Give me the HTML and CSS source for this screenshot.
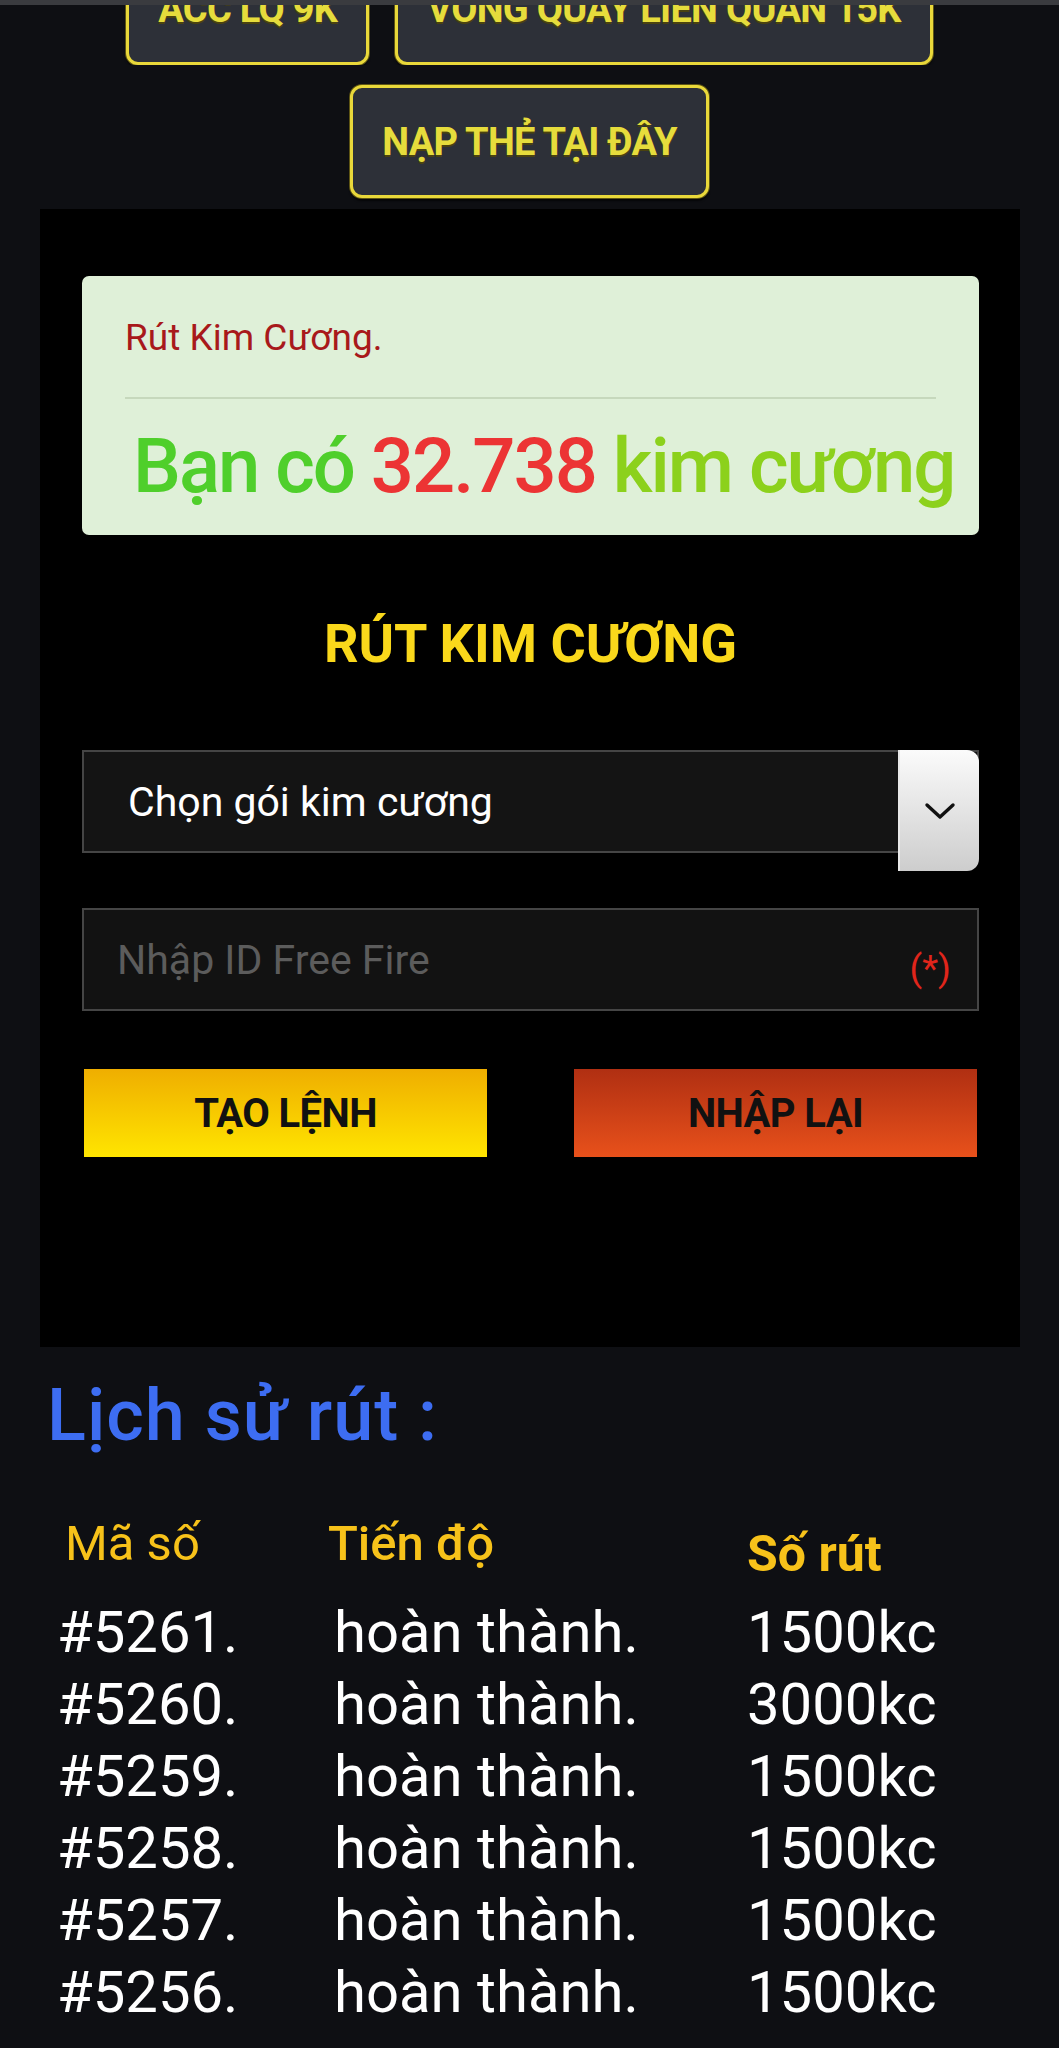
FILE: index.html
```html
<!DOCTYPE html>
<html lang="vi">

<head>
    <meta charset="UTF-8">
    <meta name="viewport" content="width=device-width, initial-scale=1.0">
    <title>Rút Kim Cương</title>
    <link rel="stylesheet" href="styles.css">
</head>

<body>
    <div class="status-bar"></div>

    <div class="top-links clipped">
        <a class="game-btn" href="#">ACC LQ 9K</a>
        <a class="game-btn" href="#">VÒNG QUAY LIÊN QUÂN 15K</a>
    </div>
    <div class="top-links">
        <a class="game-btn" href="#">NẠP THẺ TẠI ĐÂY</a>
    </div>

    <div class="withdraw-box">
        <div class="alert-success">
            <p class="alert-title">Rút Kim Cương.</p>
            <hr>
            <p class="balance"><span class="txt-green">Bạn có</span> <span class="txt-red">32.738</span> <span class="txt-lime">kim cương</span></p>
        </div>

        <h3 class="form-title">RÚT KIM CƯƠNG</h3>

        <form id="withdrawForm">
            <div class="select-wrap">
                <select id="package" name="package">
                    <option value="">Chọn gói kim cương</option>
                    <option value="1500">1500 kim cương</option>
                    <option value="3000">3000 kim cương</option>
                </select>
                <span class="select-arrow">
                    <svg width="34" height="20" viewBox="0 0 34 20"><polyline points="4,4 17,16 30,4" fill="none" stroke="#111" stroke-width="3.4" stroke-linecap="round" stroke-linejoin="round"/></svg>
                </span>
            </div>
            <div class="input-wrap">
                <input type="text" id="ffid" name="ffid" placeholder="Nhập ID Free Fire">
                <span class="required">(*)</span>
            </div>
            <div class="actions">
                <button type="submit" class="btn-create">TẠO LỆNH</button>
                <button type="reset" class="btn-reset">NHẬP LẠI</button>
            </div>
        </form>
    </div>

    <h2 class="history-title">Lịch sử rút :</h2>

    <div class="history">
        <div class="history-head">
            <span class="th-code">Mã số</span>
            <span class="th-status">Tiến độ</span>
            <span class="th-amount">Số rút</span>
        </div>
        <div class="history-row"><span>#5261.</span><span>hoàn thành.</span><span>1500kc</span></div>
        <div class="history-row"><span>#5260.</span><span>hoàn thành.</span><span>3000kc</span></div>
        <div class="history-row"><span>#5259.</span><span>hoàn thành.</span><span>1500kc</span></div>
        <div class="history-row"><span>#5258.</span><span>hoàn thành.</span><span>1500kc</span></div>
        <div class="history-row"><span>#5257.</span><span>hoàn thành.</span><span>1500kc</span></div>
        <div class="history-row"><span>#5256.</span><span>hoàn thành.</span><span>1500kc</span></div>
    </div>
</body>

</html>
```

FILE: styles.css
```css
body {
    font-family: Roboto, "Liberation Sans", sans-serif;
    margin: 0;
    padding: 0;
    background-color: #0e0f13;
    color: #fff;
    overflow: hidden;
}

.status-bar {
    height: 5px;
    background: #3a3b3f;
}

.top-links {
    display: flex;
    justify-content: center;
    gap: 26px;
    margin-top: 20px;
}

.top-links.clipped {
    height: 60px;
    margin-top: 0;
    overflow: hidden;
    align-items: flex-end;
}

.game-btn {
    display: flex;
    align-items: center;
    justify-content: center;
    flex-shrink: 0;
    box-sizing: border-box;
    height: 113px;
    padding: 0 29px;
    background: #2d3038;
    border: 3px solid #e9d83a;
    border-radius: 12px;
    box-shadow: 0 0 0 1px #5e5514, 0 3px 2px rgba(0, 0, 0, 0.6);
    color: #e6dc3c;
    font-size: 38px;
    font-weight: 700;
    letter-spacing: -0.7px;
    text-decoration: none;
    text-shadow: 0 2px 0 #4a4210;
}

.withdraw-box {
    margin: 11px 39px 0 40px;
    padding: 67px 41px 190px 42px;
    background: #000;
}

.alert-success {
    height: 259px;
    box-sizing: border-box;
    padding: 40px 43px 0;
    background: #dff0d8;
    border-radius: 7px;
}

.alert-title {
    margin: 0;
    font-size: 37px;
    line-height: 44px;
    color: #a8191b;
}

.alert-success hr {
    margin: 37px 0 0;
    border: none;
    height: 2px;
    background: #c6d8bc;
}

.balance {
    margin: 22px 0 0;
    padding-left: 8px;
    font-size: 76px;
    line-height: 91px;
    font-weight: 500;
    letter-spacing: -2px;
    white-space: nowrap;
}

.txt-green {
    color: #4fcf2b;
}

.txt-red {
    color: #ec3434;
}

.txt-lime {
    color: #8cd11c;
}

.form-title {
    margin: 77px 0 74px;
    text-align: center;
    font-size: 54px;
    line-height: 64px;
    font-weight: 700;
    color: #fad81b;
}

.select-wrap,
.input-wrap {
    position: relative;
}

.select-wrap select,
.input-wrap input {
    display: block;
    width: 100%;
    height: 103px;
    box-sizing: border-box;
    margin: 0;
    border: 2px solid #454545;
    border-radius: 0;
    background: #141414;
    font-family: inherit;
    font-size: 41px;
    outline: none;
}

.select-wrap select {
    appearance: none;
    -webkit-appearance: none;
    padding: 0 100px 0 44px;
    color: #fff;
}

.select-arrow {
    position: absolute;
    top: 0;
    right: 0;
    width: 81px;
    height: 121px;
    display: flex;
    align-items: center;
    justify-content: center;
    background: linear-gradient(#fbfbfb, #cdcdcd);
    border-left: 2px solid #e8e8e8;
    border-radius: 0 12px 12px 0;
    box-sizing: border-box;
}

.input-wrap {
    margin-top: 55px;
}

.input-wrap input {
    padding: 0 90px 0 33px;
    background: #121212;
    color: #fff;
}

.input-wrap input::placeholder {
    color: #5c5c5c;
}

.required {
    position: absolute;
    right: 28px;
    top: 39px;
    font-size: 37px;
    line-height: 44px;
    color: #e0251b;
}

.actions {
    display: grid;
    grid-template-columns: 1fr 1fr;
    gap: 87px;
    margin-top: 58px;
    padding: 0 2px;
}

.actions button {
    height: 88px;
    border: none;
    border-radius: 0;
    font-family: inherit;
    font-size: 40px;
    font-weight: 700;
    letter-spacing: -0.6px;
    color: #111;
    cursor: pointer;
}

.btn-create {
    background: linear-gradient(#efae00, #ffe500);
}

.btn-reset {
    background: linear-gradient(#b02f12, #e8511b);
}

.history-title {
    margin: 29px 0 0 47px;
    font-size: 72px;
    line-height: 80px;
    font-weight: 500;
    letter-spacing: 1px;
    color: #3d6df2;
}

.history {
    margin-top: 58px;
    padding-left: 57px;
}

.history-head,
.history-row {
    display: grid;
    grid-template-columns: 277px 413px 1fr;
    align-items: start;
}

.history-head {
    margin-bottom: 12px;
    font-size: 49px;
    line-height: 60px;
    color: #f7c21a;
}

.th-code {
    padding-left: 8px;
}

.th-status {
    margin-left: -6px;
    font-weight: 500;
}

.th-amount {
    padding-top: 10px;
    font-weight: 700;
    font-size: 50px;
}

.history-row {
    font-size: 58px;
    line-height: 72px;
}
```
